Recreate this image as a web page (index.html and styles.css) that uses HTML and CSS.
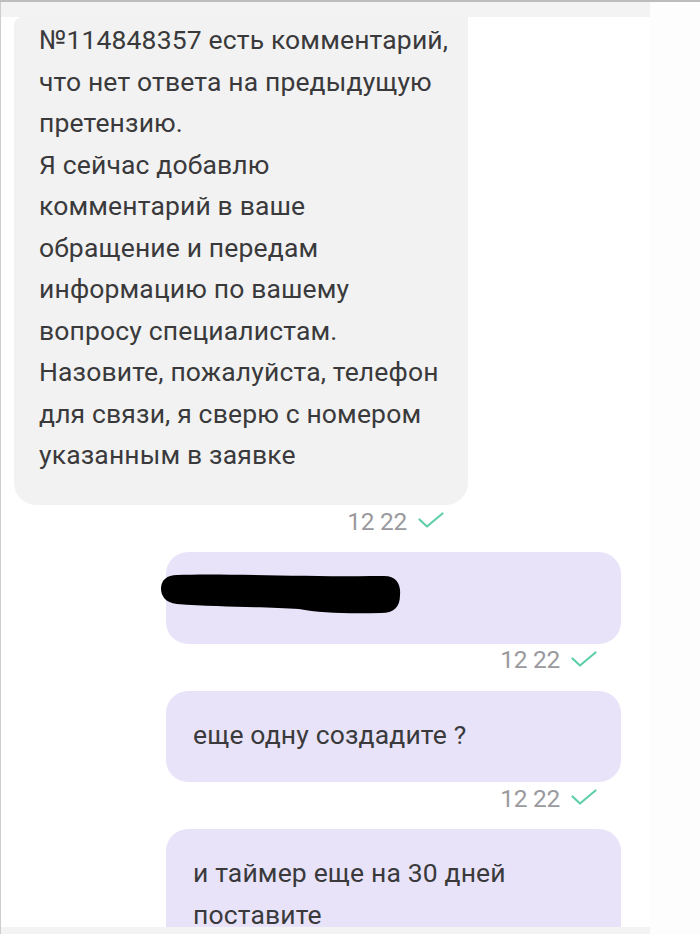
FILE: index.html
```html
<!DOCTYPE html>
<html lang="ru">
<head>
<meta charset="utf-8">
<title>Чат</title>
<link rel="stylesheet" href="styles.css">
</head>
<body>
<div class="screen">
  <div class="topline"></div>
  <div class="layout">
    <div class="chat">
      <div class="header-strip"></div>
      <div class="msg msg-in">
        <div class="bubble bubble-in">№114848357 есть комментарий,<br>что нет ответа на предыдущую<br>претензию.<br>Я сейчас добавлю<br>комментарий в ваше<br>обращение и передам<br>информацию по вашему<br>вопросу специалистам.<br>Назовите, пожалуйста, телефон<br>для связи, я сверю с номером<br>указанным в заявке</div>
        <div class="meta"><span class="time">12 22</span><svg class="check" width="26" height="16" viewBox="0 0 26 16"><polyline points="1.5,7.5 9,14.5 24.5,1.5" fill="none" stroke="#5fcfa7" stroke-width="2.2" stroke-linecap="round" stroke-linejoin="round"/></svg></div>
      </div>
      <div class="msg msg-out">
        <div class="bubble bubble-out redacted-wrap">
          <span class="hidden-text">&nbsp;</span>
          <svg class="scribble" width="244" height="46" viewBox="0 0 244 46"><path d="M18 4 C60 2 150 6 225 5 C238 5 242 14 241 24 C241 36 235 42 222 42 C190 43 160 42 140 38 C110 36 60 36 18 33 C6 32 2 24 2 18 C2 9 8 4 18 4 Z" fill="#000"/></svg>
        </div>
        <div class="meta"><span class="time">12 22</span><svg class="check" width="26" height="16" viewBox="0 0 26 16"><polyline points="1.5,7.5 9,14.5 24.5,1.5" fill="none" stroke="#5fcfa7" stroke-width="2.2" stroke-linecap="round" stroke-linejoin="round"/></svg></div>
      </div>
      <div class="msg msg-out">
        <div class="bubble bubble-out">еще одну создадите ?</div>
        <div class="meta"><span class="time">12 22</span><svg class="check" width="26" height="16" viewBox="0 0 26 16"><polyline points="1.5,7.5 9,14.5 24.5,1.5" fill="none" stroke="#5fcfa7" stroke-width="2.2" stroke-linecap="round" stroke-linejoin="round"/></svg></div>
      </div>
      <div class="msg msg-out">
        <div class="bubble bubble-out">и таймер еще на 30 дней<br>поставите</div>
      </div>
      <div class="bottom-strip"></div>
    </div>
    <div class="side"></div>
  </div>
</div>
</body>
</html>
```
FILE: styles.css
```css
html, body {
  margin: 0;
  padding: 0;
  background: #ffffff;
}
.screen {
  width: 700px;
  height: 934px;
  overflow: hidden;
  display: flex;
  flex-direction: column;
  font-family: Roboto, "Liberation Sans", Arial, sans-serif;
}
.topline {
  height: 2px;
  background: #bdbdbd;
  flex-shrink: 0;
}
.layout {
  flex: 1;
  display: flex;
  min-height: 0;
}
.chat {
  position: relative;
  width: 649px;
  border-left: 1px solid #cdcdcd;
  background: #ffffff;
  display: flex;
  flex-direction: column;
  overflow: hidden;
}
.side {
  flex: 1;
  background: #fdfdfd;
}
.header-strip {
  height: 15px;
  background: #f3f3f3;
  flex-shrink: 0;
}
.msg {
  display: flex;
  flex-direction: column;
  margin-bottom: 15px;
}
.msg-in {
  align-self: flex-start;
  margin-left: 13px;
  width: 454px;
}
.msg-out {
  align-self: flex-end;
  margin-right: 29px;
  width: 455px;
}
.bubble {
  font-size: 26.5px;
  line-height: 41.5px;
  letter-spacing: 0.15px;
  color: #3a3a3c;
  box-sizing: border-box;
  white-space: nowrap;
}
.bubble-in {
  background: #f2f2f2;
  padding: 2px 10px 29.5px 25px;
  border-radius: 8px 0 22px 22px;
}
.bubble-out {
  background: #e8e3f8;
  padding: 23px 10px 27px 27px;
  border-radius: 22px;
}
.redacted-wrap {
  position: relative;
}
.scribble {
  position: absolute;
  left: -7px;
  top: 19px;
}
.meta {
  height: 32px;
  display: flex;
  align-items: center;
  justify-content: flex-end;
  padding-right: 24px;
  gap: 11px;
}
.time {
  font-size: 24.5px;
  color: #9a9a9e;
  letter-spacing: -0.3px;
}
.check {
  display: block;
  margin-top: -2px;
}
.bottom-strip {
  position: absolute;
  left: 0;
  right: 0;
  bottom: 0;
  height: 7px;
  background: #f3f3f3;
}
```
